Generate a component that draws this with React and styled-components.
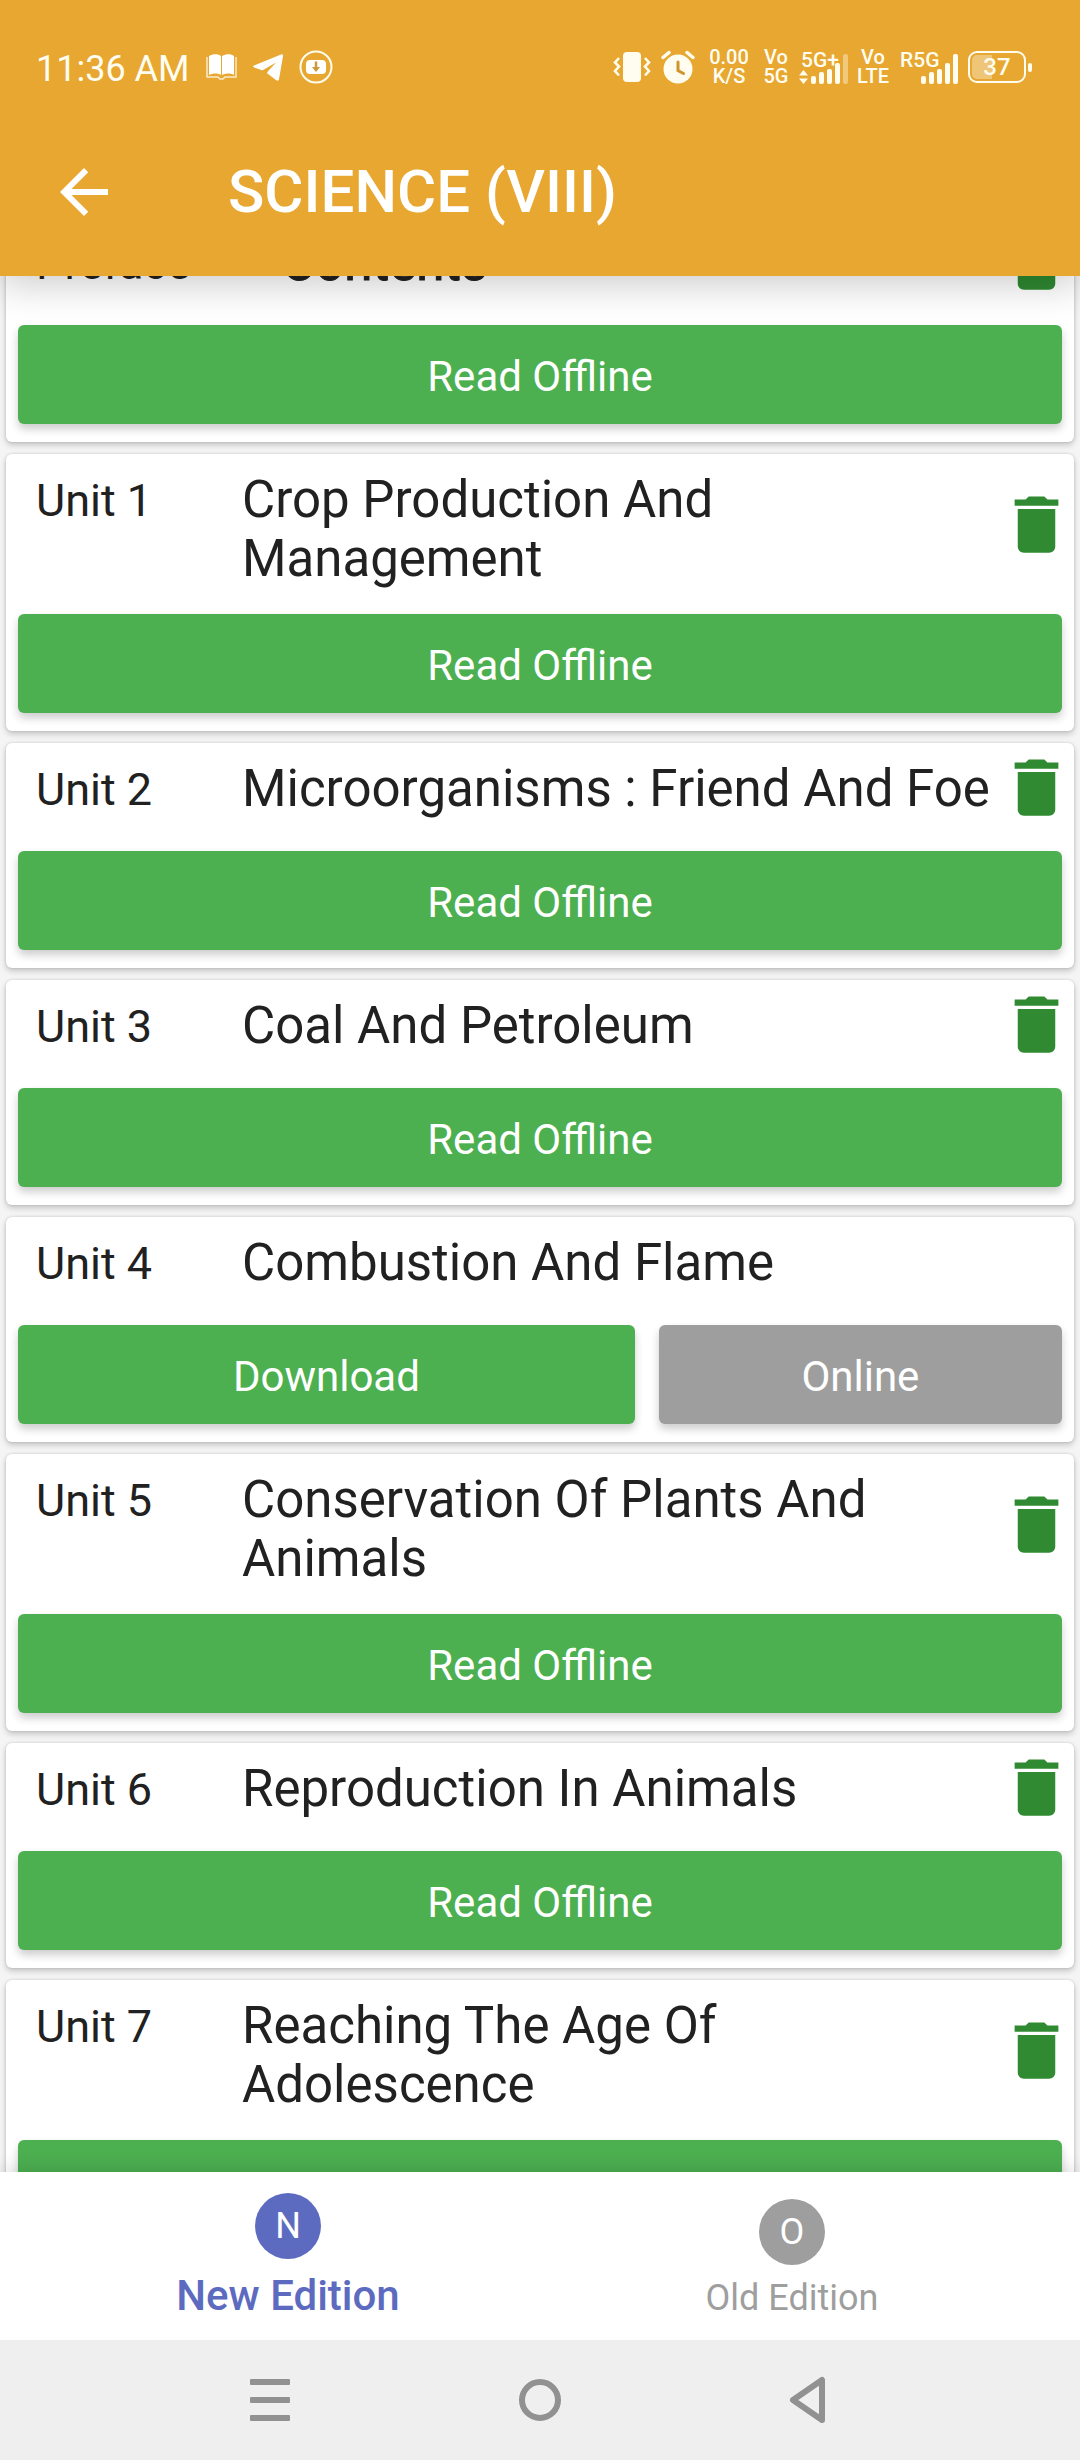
import React, { useLayoutEffect, useRef, useState } from "react";
import styled, { createGlobalStyle } from "styled-components";

const chapters = [
  { unit: "Preface", title: "Contents", saved: true, strong: true },
  { unit: "Unit 1", title: "Crop Production And Management", saved: true },
  { unit: "Unit 2", title: "Microorganisms : Friend And Foe", saved: true },
  { unit: "Unit 3", title: "Coal And Petroleum", saved: true },
  { unit: "Unit 4", title: "Combustion And Flame", saved: false },
  { unit: "Unit 5", title: "Conservation Of Plants And Animals", saved: true },
  { unit: "Unit 6", title: "Reproduction In Animals", saved: true },
  { unit: "Unit 7", title: "Reaching The Age Of Adolescence", saved: true },
];

const editions = [
  { id: "new", letter: "N", label: "New Edition" },
  { id: "old", letter: "O", label: "Old Edition" },
];

const SignalBars = ({ dimLast }) => (
  <svg width="37" height="30" viewBox="0 0 37 30" fill="#fffdf0">
    <rect x="0" y="22" width="5" height="8" rx="2" />
    <rect x="8" y="18" width="5" height="12" rx="2" />
    <rect x="16" y="15" width="5" height="15" rx="2" />
    <rect x="24" y="9" width="5" height="21" rx="2" />
    <rect x="32" y="0" width="5" height="30" rx="2" opacity={dimLast ? 0.4 : 1} />
  </svg>
);

const StatusBar = () => (
  <StatusRow>
    <StatusGroup $gap="16px">
      <Clock>11:36 AM</Clock>
      <svg width="31" height="26" viewBox="0 0 31 26">
        <path d="M1 3v20h11l2 2h3l2-2h11V3" fill="none" stroke="#fffdf0" strokeWidth="1.5" opacity="0.8" />
        <path d="M3 2c4-2.500 9-2.500 12 0v19c-3-2-8-2-12 0zM16 2c4-2.500 9-2.500 12 0v19c-3-2-8-2-12 0z" fill="#fff" />
      </svg>
      <svg width="30" height="27" viewBox="0 0 30 27" fill="#fff">
        <path d="M1 11.500 28 .4c1.300-.5 2.300.3 2 1.800l-4 23c-.3 1.500-1.500 1.800-2.700 1l-8.600-6.500c-.8-.7-.8-1.300-.1-2L23 8.500 10.500 15.800c-.7.400-1.400.5-2.200.2L1.200 13.500C-.2 13-.2 12 1 11.500z" />
      </svg>
      <svg width="34" height="34" viewBox="0 0 34 34">
        <circle cx="17" cy="17" r="15.500" fill="none" stroke="#fffdf0" strokeWidth="2" />
        <rect x="7" y="10" width="20" height="14" rx="4" fill="#fff" />
        <path d="M17 11.500v7" fill="none" stroke="#cf9838" strokeWidth="2.500" />
        <path d="M13 17h8l-4 5z" fill="#cf9838" />
      </svg>
    </StatusGroup>
    <StatusGroup $gap="10px">
      <svg width="38" height="32" viewBox="0 0 38 32">
        <rect x="10" y="1" width="18" height="30" rx="4" fill="#fffdf0" />
        <path d="M6 7 2 11.500l4 4-4 4.500 4 4.500M32 7l4 4.500-4 4 4 4.500-4 4.500" fill="none" stroke="#fffdf0" strokeWidth="2.600" />
      </svg>
      <svg width="34" height="34" viewBox="0 0 34 34">
        <circle cx="17" cy="19" r="14.500" fill="#fffdf0" />
        <path d="M2 7.500 8 2.500M32 7.500 26 2.500" stroke="#fffdf0" strokeWidth="3.500" strokeLinecap="round" />
        <path d="M17 12v8.500l5.500 3" fill="none" stroke="#d0942a" strokeWidth="3" strokeLinecap="round" />
      </svg>
      <TinyStack $width="48px">
        <span>0.00</span>
        <span>K/S</span>
      </TinyStack>
      <TinyStack $width="26px">
        <span>Vo</span>
        <span>5G</span>
      </TinyStack>
      <Signal>
        <SignalLabel>5G+</SignalLabel>
        <svg width="9" height="14" viewBox="0 0 9 14" fill="#fffdf0">
          <path d="M4.500 0 9 5.500H0zM4.500 14 9 8.500H0z" />
        </svg>
        <SignalBars dimLast />
      </Signal>
      <TinyStack $width="30px">
        <span>Vo</span>
        <span>LTE</span>
      </TinyStack>
      <Signal $indent>
        <SignalLabel>R5G</SignalLabel>
        <SignalBars />
      </Signal>
      <Battery>
        <BatteryBody>37</BatteryBody>
        <BatteryTip />
      </Battery>
    </StatusGroup>
  </StatusRow>
);

const TrashIcon = () => (
  <svg width="75" height="75" viewBox="0 0 24 24" fill="#2f8a31">
    <path d="M6 19c0 1.100.9 2 2 2h8c1.100 0 2-.9 2-2V7H6zM19 4h-3.500l-1-1h-5l-1 1H5v2h14z" />
  </svg>
);

const Chapter = ({ unit, title, saved, strong }) => (
  <Card>
    <CardHead>
      <Unit>{unit}</Unit>
      <Title $strong={strong}>{title}</Title>
      {saved && (
        <TrashButton aria-label={`Delete ${title}`}>
          <TrashIcon />
        </TrashButton>
      )}
    </CardHead>
    <Actions $split={!saved}>
      {saved ? (
        <ActionButton>Read Offline</ActionButton>
      ) : (
        <>
          <ActionButton>Download</ActionButton>
          <ActionButton $muted>Online</ActionButton>
        </>
      )}
    </Actions>
  </Card>
);

const App = () => {
  const listRef = useRef(null);
  const [edition, setEdition] = useState("new");

  // keep the reader a little way down the list
  useLayoutEffect(() => {
    listRef.current.scrollTop = 65;
  }, []);

  return (
    <Page>
      <GlobalStyle />
      <Header>
        <StatusBar />
        <Toolbar>
          <BackButton aria-label="Back">
            <svg width="72" height="72" viewBox="0 0 24 24" fill="#fff">
              <path d="M20 11H7.830l5.590-5.590L12 4l-8 8 8 8 1.410-1.410L7.830 13H20z" />
            </svg>
          </BackButton>
          <ToolbarTitle>SCIENCE (VIII)</ToolbarTitle>
        </Toolbar>
      </Header>
      <List ref={listRef}>
        {chapters.map((chapter) => (
          <Chapter key={chapter.unit} {...chapter} />
        ))}
      </List>
      <EditionNav>
        {editions.map(({ id, letter, label }) => (
          <EditionButton key={id} $active={id === edition} onClick={() => setEdition(id)}>
            <Avatar $active={id === edition}>{letter}</Avatar>
            <EditionLabel $active={id === edition}>{label}</EditionLabel>
          </EditionButton>
        ))}
      </EditionNav>
      <SystemNav>
        <SystemButton aria-label="Recents">
          <svg width="48" height="48" viewBox="0 0 48 48" fill="#919191">
            <rect x="4" y="3" width="40" height="6" rx="1" />
            <rect x="4" y="21" width="40" height="6" rx="1" />
            <rect x="4" y="39" width="40" height="6" rx="1" />
          </svg>
        </SystemButton>
        <SystemButton aria-label="Home">
          <svg width="48" height="48" viewBox="0 0 48 48" fill="none" stroke="#919191" strokeWidth="6">
            <circle cx="24" cy="24" r="18" />
          </svg>
        </SystemButton>
        <SystemButton aria-label="Back">
          <svg width="48" height="48" viewBox="0 0 48 48" fill="none" stroke="#919191" strokeWidth="6" strokeLinejoin="round">
            <path d="M36 4v40L7 24z" />
          </svg>
        </SystemButton>
      </SystemNav>
    </Page>
  );
};

export default App;

const GlobalStyle = createGlobalStyle`
  * {
    box-sizing: border-box;
  }
  body {
    margin: 0;
    font-family: Roboto, sans-serif;
    color: #212121;
  }
  button {
    padding: 0;
    border: none;
    background: none;
    font-family: inherit;
    cursor: pointer;
  }
  svg {
    display: block;
    flex-shrink: 0;
  }
`;

const Page = styled.div`
  display: flex;
  flex-direction: column;
  height: 100vh;
  background-color: #f5f5f5;
`;

const Header = styled.header`
  position: relative;
  z-index: 1;
  background-color: #e7a730;
  box-shadow: 0 9px 36px rgba(0, 0, 0, 0.2);
  color: #fff;
`;

const StatusRow = styled.div`
  display: flex;
  justify-content: space-between;
  align-items: center;
  padding: 50px 48px 24px 36px;
  height: 108px;
`;

const StatusGroup = styled.div`
  display: flex;
  align-items: center;
  gap: ${({ $gap }) => $gap};
  color: #fffdf0;
`;

const Clock = styled.span`
  padding-top: 3px;
  font-size: 36px;
  line-height: 36px;
`;

const TinyStack = styled.div`
  display: flex;
  flex-direction: column;
  align-items: center;
  width: ${({ $width }) => $width};
  font-size: 20px;
  font-weight: 500;
  line-height: 19px;
`;

const Signal = styled.div`
  position: relative;
  display: flex;
  align-items: flex-end;
  gap: 3px;
  padding: ${({ $indent }) => ($indent ? "3px 0 0 23px" : "3px 0 0")};
`;

const SignalLabel = styled.span`
  position: absolute;
  top: -3px;
  left: 2px;
  font-size: 21px;
  font-weight: 500;
  line-height: 24px;
`;

const Battery = styled.div`
  display: flex;
  align-items: center;
  gap: 2px;
`;

const BatteryBody = styled.span`
  width: 58px;
  height: 32px;
  border: 2px solid #fffdf0;
  border-radius: 9px;
  background: linear-gradient(90deg, rgba(255, 255, 255, 0.35) 20px, transparent 20px) content-box;
  padding: 2px;
  font-size: 24px;
  font-weight: 500;
  line-height: 25px;
  text-align: center;
`;

const BatteryTip = styled.span`
  width: 4px;
  height: 9px;
  border-radius: 2px;
  background-color: #fffdf0;
`;

const Toolbar = styled.div`
  display: flex;
  align-items: center;
  gap: 108px;
  height: 168px;
  padding: 0 48px;
`;

const BackButton = styled.button`
  width: 72px;
  height: 72px;
`;

const ToolbarTitle = styled.h1`
  margin: 0;
  font-size: 60px;
  font-weight: 500;
  line-height: 72px;
`;

const List = styled.main`
  flex: 1;
  min-height: 0;
  overflow-y: auto;
  scrollbar-width: none;
  display: flex;
  flex-direction: column;
  gap: 12px;
  padding: 6px;
`;

const Card = styled.article`
  flex-shrink: 0;
  padding-bottom: 18px;
  border-radius: 6px;
  background-color: #fff;
  box-shadow: 0 3px 6px rgba(0, 0, 0, 0.2), 0 0 3px rgba(0, 0, 0, 0.14);
`;

const CardHead = styled.div`
  display: flex;
  align-items: flex-start;
  min-height: 90px;
  margin-bottom: 18px;
  padding-left: 30px;
`;

const Unit = styled.span`
  flex-shrink: 0;
  width: 206px;
  padding-top: 20px;
  font-size: 45px;
  line-height: 53px;
`;

const Title = styled.h2`
  flex: 1;
  margin: 0;
  padding: ${({ $strong }) => ($strong ? "16px 0 8px 40px" : "16px 0 8px")};
  font-size: 51px;
  font-weight: 400;
  line-height: 59px;
  -webkit-text-stroke: ${({ $strong }) => ($strong ? "1px #212121" : "0")};
`;

const TrashButton = styled.button`
  align-self: center;
  width: 75px;
  height: 75px;
  margin-bottom: 2px;
`;

const Actions = styled.div`
  display: grid;
  grid-template-columns: ${({ $split }) => ($split ? "3fr 2fr" : "1fr")};
`;

const ActionButton = styled.button`
  height: 99px;
  margin: 0 12px;
  padding-top: 3px;
  border-radius: 6px;
  background-color: ${({ $muted }) => ($muted ? "#9e9e9e" : "#4caf50")};
  box-shadow: 0 5px 9px rgba(0, 0, 0, 0.2);
  color: #fff;
  font-size: 42px;
`;

const EditionNav = styled.nav`
  position: relative;
  display: grid;
  grid-template-columns: 1fr 1fr;
  height: 168px;
  padding: 0 36px;
  background-color: #fff;
  box-shadow: 0 -2px 18px rgba(0, 0, 0, 0.14);
`;

const EditionButton = styled.button`
  display: flex;
  flex-direction: column;
  align-items: center;
  justify-content: flex-end;
  gap: 12px;
  padding-bottom: 20px;
  color: ${({ $active }) => ($active ? "#5c6bc0" : "#9e9e9e")};
`;

const Avatar = styled.span`
  display: flex;
  align-items: center;
  justify-content: center;
  width: 66px;
  height: 66px;
  border-radius: 50%;
  background-color: ${({ $active }) => ($active ? "#5c6bc0" : "#9e9e9e")};
  color: #fff;
  font-size: 36px;
`;

const EditionLabel = styled.span`
  font-size: ${({ $active }) => ($active ? "42px" : "36px")};
  font-weight: ${({ $active }) => ($active ? 500 : 400)};
  line-height: ${({ $active }) => ($active ? "49px" : "43px")};
`;

const SystemNav = styled.footer`
  position: relative;
  display: grid;
  grid-template-columns: repeat(3, 25%);
  justify-content: center;
  height: 120px;
  background-color: #efefef;
`;

const SystemButton = styled.button`
  display: flex;
  align-items: center;
  justify-content: center;
`;
